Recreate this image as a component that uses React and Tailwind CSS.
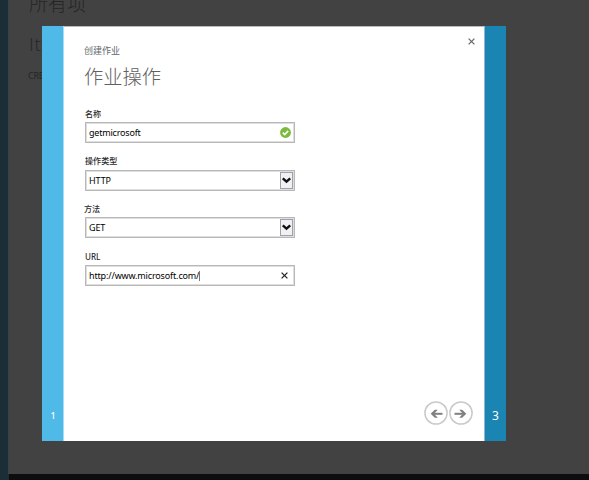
import React from "react";

function Label({ children, className = "" }) {
  return (
    <div className={`h-[14px] whitespace-nowrap text-[8.1px] leading-[14px] font-medium text-[#2c2c2c] ${className}`}>
      {children}
    </div>
  );
}

function Box({ children, icon, className = "" }) {
  return (
    <div className={`ml-px flex h-[21px] w-[210px] items-center justify-between border border-[#b8b8b8] bg-white pr-px pl-[3px] text-[9px] leading-none text-black inset-ring inset-ring-[#dedede] ${className}`}>
      {children}
      {icon}
    </div>
  );
}

function DropButton() {
  return (
    <span className="flex h-[17px] w-[13px] items-center justify-center border border-[#a0a0a8] bg-[#f0f0f5]">
      <svg width="9" height="7" viewBox="0 0 9 7" fill="none" stroke="#111" strokeWidth="2.4">
        <path d="M.8 1.4 4.5 4.7 8.2 1.4" />
      </svg>
    </span>
  );
}

function Valid() {
  return (
    <svg className="mr-[2px]" width="11" height="11" viewBox="0 0 11 11" fill="none">
      <circle cx="5.5" cy="5.5" r="5.4" fill="#7cba3b" />
      <path d="m2.8 5.6 1.9 1.9 3.5-3.6" stroke="#fff" strokeWidth="1.6" />
    </svg>
  );
}

function Cross({ className, size, color }) {
  return (
    <svg className={className} width={size} height={size} viewBox="0 0 7 7" fill="none" stroke={color} strokeWidth="1.25">
      <path d="m.6.6 5.8 5.8M6.4.6.6 6.4" />
    </svg>
  );
}

function RoundArrow({ flip }) {
  return (
    <svg className={flip ? "-scale-x-100" : ""} width="24" height="24" viewBox="0 0 24 24" fill="none">
      <circle cx="12" cy="12" r="11.1" stroke="#cacaca" strokeWidth="1.5" />
      <path d="M5.5 12.8h10" stroke="#808080" strokeWidth="2" />
      <path d="M10.2 8.8h3l4.1 4-4.1 4h-3l3.8-4z" fill="#808080" />
    </svg>
  );
}

export default function App() {
  return (
    <div className="relative flex h-[480px] w-[589px] flex-col overflow-hidden bg-[#424242] font-['Noto_Sans','Noto_Sans_CJK_SC',sans-serif]">
      <div className="flex flex-1">
        <div className="w-[9px] border-r border-[#33444b] bg-[#1b2e36]" />
        <div className="pl-5 text-[#252525]">
          <div className="-mt-[8px] h-[24px] text-[19px] leading-[24px] font-light">所有项</div>
          <div className="mt-[16px] h-[24px] font-['Open_Sans',sans-serif] text-[19px] leading-[24px] font-light tracking-[0.8px]">Items</div>
          <div className="mt-[13px] -ml-px text-[9px] leading-[14px] tracking-[-0.3px]">CREATE</div>
        </div>
      </div>
      <div className="flex h-[6px]">
        <div className="w-[9px] bg-[#1b2e36]" />
        <div className="flex-1 bg-[#0d0c0f]" />
      </div>

      <div className="absolute top-[26px] left-[42px] flex h-[415px] w-[464px]">
        <div className="flex w-[22px] flex-col justify-end border-r border-[#a9dbf3] bg-[#4fb9e7] pb-[18px] pl-px text-center text-[9px] leading-[15px] font-medium text-white">1</div>
        <div className="flex w-[420px] flex-col border-t border-[#bbb] bg-white">
          <div className="flex justify-between pr-[9px] pl-[20px]">
            <div>
              <div className="mt-[17px] h-[14px] text-[9px] leading-[14px] text-[#62676c]">创建作业</div>
              <div className="mt-[5px] h-[28px] text-[19.3px] leading-[28px] font-light text-[#606060]">作业操作</div>
            </div>
            <Cross className="mt-[11px]" size={7} color="#666" />
          </div>
          <div className="mt-[16px] flex flex-col pl-[20px]">
            <Label className="pl-px">名称</Label>
            <Box className="mt-px" icon={<Valid />}><span className="tracking-[-0.2px]">getmicrosoft</span></Box>
            <Label className="mt-[11px] pl-px">操作类型</Label>
            <Box className="mt-[2px]" icon={<DropButton />}><span className="tracking-[-0.1px]">HTTP</span></Box>
            <Label className="mt-[11px]">方法</Label>
            <Box className="mt-px" icon={<DropButton />}><span className="tracking-[-0.1px]">GET</span></Box>
            <Label className="mt-[12px] pl-px">URL</Label>
            <Box className="mt-px" icon={<Cross className="mr-[5px]" size={7} color="#222" />}>
              <span className="flex items-center tracking-[-0.15px]">http://www.microsoft.com/<i className="h-[10px] w-px bg-[#777]" /></span>
            </Box>
          </div>
          <div className="mt-auto mb-[16px] flex justify-end gap-px pr-[11px]">
            <RoundArrow flip />
            <RoundArrow />
          </div>
        </div>
        <div className="flex w-[22px] flex-col justify-end border-l border-[#8eb9d0] bg-[#1a85b3] pb-[16px] text-center text-[12px] leading-[18px] text-white">3</div>
      </div>
    </div>
  );
}
